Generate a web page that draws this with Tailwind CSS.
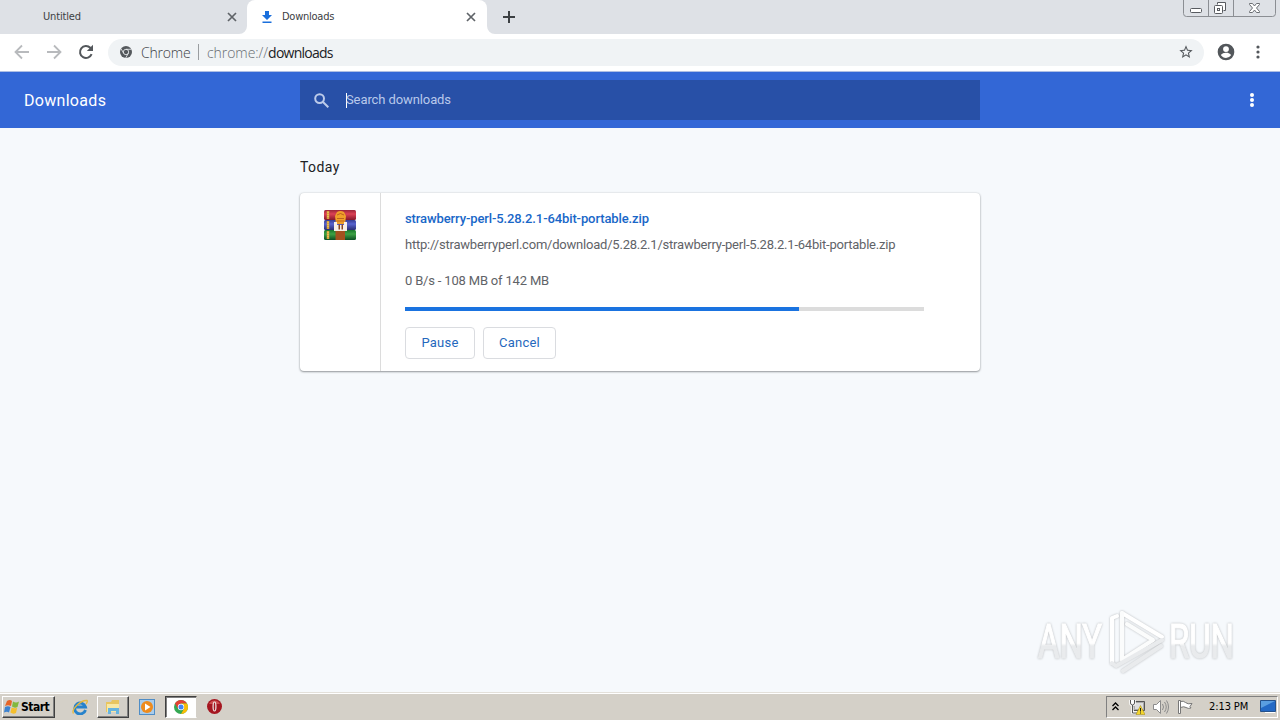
<!DOCTYPE html>
<html lang="en">

<head>
    <meta charset="UTF-8">
    <meta name="viewport" content="width=device-width, initial-scale=1.0">
    <title>Downloads</title>
    <script src="https://cdn.jsdelivr.net/npm/@tailwindcss/browser@4"></script>
</head>

<body class="w-[1280px] h-[720px] overflow-hidden flex flex-col bg-[#f6f9fc] font-[Roboto,sans-serif] text-[13px]">

    <!-- Tab strip -->
    <div class="relative h-[34px] shrink-0 bg-[#dee1e6] flex font-['DejaVu_Sans_Condensed','DejaVu_Sans',sans-serif] text-[11px] text-[#3c4043]">
        <div class="w-[247px] flex items-center pl-[43px] pr-[10px]">
            <span class="pt-px tracking-[-0.15px]">Untitled</span>
            <svg class="ml-auto w-[10px] h-[10px]" viewBox="0 0 10 10" stroke="#5f6368" stroke-width="1.7"><path d="M1 1l8 8M9 1l-8 8"/></svg>
        </div>
        <div class="relative w-[240px] bg-white rounded-t-lg flex items-center pl-[14px] pr-[11px]">
            <svg class="absolute -left-2 bottom-0 w-2 h-2" viewBox="0 0 8 8" fill="#fff"><path d="M8 0v8H0a8 8 0 0 0 8-8z"/></svg>
            <svg class="absolute -right-2 bottom-0 w-2 h-2" viewBox="0 0 8 8" fill="#fff"><path d="M0 0v8h8a8 8 0 0 1-8-8z"/></svg>
            <svg class="w-3 h-3" viewBox="0 0 12 12" fill="#1a6fdc"><path d="M4 0h4v4h3L6 9 1 4h3zM1.5 10.5h9V12h-9z"/></svg>
            <span class="ml-[9px] pt-px tracking-[-0.25px]">Downloads</span>
            <svg class="ml-auto w-[10px] h-[10px]" viewBox="0 0 10 10" stroke="#5f6368" stroke-width="1.7"><path d="M1 1l8 8M9 1l-8 8"/></svg>
        </div>
        <svg class="ml-4 mt-[11px] w-3 h-3" viewBox="0 0 12 12" stroke="#3c4043" stroke-width="2"><path d="M6 0v12M0 6h12"/></svg>
        <!-- Window controls -->
        <svg class="absolute left-[1183px] top-0 w-[94px] h-[18px]" viewBox="0 0 94 18" fill="none">
            <path d="M.5 0v13.5q0 3 3 3h86q3 0 3-3V0M25.500 0v16M50.500 0v16" stroke="#8b8e93"/>
            <rect x="7.500" y="8.500" width="11" height="4" rx="1" fill="#fff" stroke="#585b60"/>
            <path d="M34.500 4.500v-2h8v8h-2" fill="#fff" stroke="#585b60"/>
            <rect x="31.500" y="5.500" width="8" height="8" rx="1" fill="#fff" stroke="#585b60"/>
            <rect x="34.500" y="8.500" width="2" height="2" stroke="#585b60"/>
            <path d="M66.500 3.500h3l2 2.500 2-2.500h3v1l-3 3.500 3 3.500v1h-3l-2-2.500-2 2.500h-3v-1l3-3.500-3-3.500z" fill="#fff" stroke="#6b6e73"/>
        </svg>
    </div>

    <!-- Toolbar -->
    <div class="h-[38px] shrink-0 bg-white border-b border-[#aebfe4] flex items-center pb-px pl-[14px] pr-[14px]">
        <svg class="w-4 h-4" viewBox="0 0 16 16" fill="none" stroke="#b8babd" stroke-width="1.8"><path d="M15 8H2M8 1.500L1.500 8 8 14.500"/></svg>
        <svg class="ml-4 w-4 h-4" viewBox="0 0 16 16" fill="none" stroke="#b8babd" stroke-width="1.8"><path d="M1 8h13M8 1.500L14.500 8 8 14.500"/></svg>
        <svg class="ml-4 w-4 h-4" viewBox="0 0 16 16" fill="none" stroke="#53575b" stroke-width="2"><path d="M13.600 10.200A6 6 0 1 1 12.300 3.800L14 5.500"/><path d="M15 .8V7H8.800z" fill="#53575b" stroke="none"/></svg>
        <div class="ml-[14px] w-[1096px] h-[27px] rounded-full bg-[#f0f3f5] flex items-center pl-3 pr-[10px] font-['Open_Sans',sans-serif] font-light text-[14px]">
            <svg class="w-3 h-3" viewBox="0 0 12 12"><circle cx="6" cy="6" r="6" fill="#55595d"/><g stroke="#f0f3f5" stroke-width=".8" fill="none"><circle cx="6" cy="6" r="2.700"/><path d="M6 3.300h5.500M3.700 7.300L1 2.700M8.300 7.300L5.700 12"/></g></svg>
            <span class="ml-[9px] w-[50px] tracking-[-0.2px] text-[#3c4146]">Chrome</span>
            <span class="ml-[7px] w-px h-4 bg-[#9a9da0]"></span>
            <span class="ml-[8px] tracking-[-0.05px] text-[#686d72]">chrome://<span class="text-[#202124] font-normal tracking-[-0.75px]">downloads</span></span>
            <svg class="ml-auto w-[16px] h-[16px]" viewBox="0 0 24 24" fill="#55595d"><path d="M22 9.240l-7.190-.62L12 2 9.190 8.630 2 9.240l5.460 4.730L5.820 21 12 17.270 18.180 21l-1.630-7.030L22 9.240zM12 15.400l-3.760 2.270 1-4.280-3.320-2.880 4.380-.38L12 6.100l1.710 4.040 4.380.38-3.320 2.880 1 4.280L12 15.400z"/></svg>
        </div>
        <svg class="ml-[12px] w-5 h-5" viewBox="0 0 24 24" fill="#53575b"><path d="M12 2a10 10 0 1 0 0 20 10 10 0 0 0 0-20zm0 3a3.500 3.500 0 1 1 0 7 3.500 3.500 0 0 1 0-7zm0 14.200c-2.500 0-4.710-1.280-6-3.220.03-1.990 4-3.080 6-3.080s5.970 1.090 6 3.080a7.200 7.200 0 0 1-6 3.220z"/></svg>
        <svg class="ml-auto mr-[6px] w-1 h-[14px]" viewBox="0 0 4 14" fill="#53575b"><circle cx="2" cy="2" r="1.600"/><circle cx="2" cy="7" r="1.600"/><circle cx="2" cy="12" r="1.600"/></svg>
    </div>

    <!-- Downloads header -->
    <div class="h-14 shrink-0 bg-[#3367d6] flex items-center">
        <h1 class="w-[300px] pl-6 pt-px text-[16px] tracking-[0.3px] text-white">Downloads</h1>
        <div class="w-[680px] h-10 bg-[#2850a7] flex items-center pl-[14px]">
            <svg class="w-[15px] h-[15px]" viewBox="0 0 15 15" fill="none" stroke="#bccbea" stroke-width="2"><circle cx="5.600" cy="5.600" r="4.400"/><path d="M9 9l5.300 5.300"/></svg>
            <span class="ml-[17px] w-px h-[15px] bg-white"></span>
            <span class="-ml-px tracking-[-0.1px] text-[#b9c9eb]">Search downloads</span>
        </div>
        <svg class="ml-auto mr-[26px] w-1 h-[14px]" viewBox="0 0 4 14" fill="#fff"><circle cx="2" cy="2" r="2"/><circle cx="2" cy="7" r="2"/><circle cx="2" cy="12" r="2"/></svg>
    </div>

    <!-- Download list -->
    <main class="relative flex-1 pl-[300px]">
        <h2 class="pt-[29px] h-[65px] text-[14px] leading-5 tracking-[0.4px] text-[#202124]">Today</h2>
        <div class="w-[680px] h-[178px] bg-white rounded flex shadow-[0_1px_2px_rgba(60,64,67,0.5),0_0_2px_rgba(60,64,67,0.2)]">
            <div class="w-[81px] border-r border-[#dcdcdc] pt-4 pl-6">
                <svg class="w-8 h-8" viewBox="0 0 32 32">
                    <defs>
                        <linearGradient id="red" x2="0" y2="1"><stop stop-color="#9b2638"/><stop offset=".4" stop-color="#dc4255"/><stop offset="1" stop-color="#85172a"/></linearGradient>
                        <linearGradient id="blue" x2="0" y2="1"><stop stop-color="#353b92"/><stop offset=".4" stop-color="#5864cf"/><stop offset="1" stop-color="#292d73"/></linearGradient>
                        <linearGradient id="green" x2="0" y2="1"><stop stop-color="#18752d"/><stop offset=".4" stop-color="#3da244"/><stop offset="1" stop-color="#0c4e23"/></linearGradient>
                    </defs>
                    <rect y="1" width="32" height="10" rx="1.500" fill="url(#red)"/>
                    <rect y="11" width="32" height="10" rx="1.500" fill="url(#blue)"/>
                    <rect y="21" width="32" height="10" rx="1.500" fill="url(#green)"/>
                    <path d="M4 2v8M4 12v8M4 22v8" stroke="#d9a43c" stroke-width="2.500"/>
                    <path d="M4 3v6M4 13v6M4 23v6" stroke="#f5d56d" stroke-dasharray="1 1"/>
                    <path d="M11.500 21h9.500v10h-9.500z" fill="#a3521f"/>
                    <path d="M11 7l2-4q3.500-2 7 0l2 4-1 8h-9z" fill="#f0a02a"/>
                    <path d="M13 6q3.500-3 7 0M13 9.500h7M12.500 12h8" stroke="#b55c1c" stroke-width=".9" fill="none"/>
                    <path d="M10 13h3v3h7v-3h3v9H10z" fill="#f7f0e8"/>
                    <path d="M14.500 15.500h1.500v5h-1.500zM17.500 15.500H19v5h-1.500z" fill="#8a461f"/>
                </svg>
            </div>
            <div class="w-[543px] pl-6 pt-[16px] flex flex-col">
                <a class="h-5 leading-5 font-medium text-[#1967c8] whitespace-nowrap tracking-[-0.11px]">strawberry-perl-5.28.2.1-64bit-portable.zip</a>
                <span class="mt-[6px] h-5 leading-5 text-[#5f6368] whitespace-nowrap tracking-[-0.215px]">http://strawberryperl.com/download/5.28.2.1/strawberry-perl-5.28.2.1-64bit-portable.zip</span>
                <span class="mt-4 h-5 leading-5 text-[#5f6368] tracking-[-0.18px]">0 B/s - 108 MB of 142 MB</span>
                <div class="mt-4 h-1 bg-[#dcdcdc]"><div class="h-full bg-[#1a73e0]" style="width: 76%"></div></div>
                <div class="mt-4 flex gap-2 text-[#2568bd]">
                    <button class="w-[70px] h-8 rounded border border-[#dadce0] tracking-[0.2px]">Pause</button>
                    <button class="w-[73px] h-8 rounded border border-[#dadce0] tracking-[0.2px]">Cancel</button>
                </div>
            </div>
        </div>
        <!-- Watermark -->
        <svg class="absolute left-[1030px] top-[476px] w-[230px] h-[76px] drop-shadow-[0_0_1px_rgba(0,0,0,0.25)]" viewBox="0 0 230 76">
            <defs><linearGradient id="mark" x2="0" y2="1"><stop offset=".53" stop-color="#fff"/><stop offset=".58" stop-color="#e9ebed"/></linearGradient></defs>
            <g font-family="Roboto, sans-serif" font-size="49" fill="url(#mark)" stroke="url(#mark)" stroke-width="1.2">
                <text x="8" y="54" textLength="64" lengthAdjust="spacingAndGlyphs">ANY</text>
                <text x="139" y="54" textLength="65" lengthAdjust="spacingAndGlyphs">RUN</text>
            </g>
            <g fill="none" stroke-width="4" stroke-linejoin="round" stroke-linecap="round">
                <path d="M82 59V14l5-2M92 55V9l40 24" stroke="#fff"/>
                <path d="M92 9V56l31-20L97 20" stroke="#fbfcfc"/>
                <path d="M82 59l4 3 46-26M93 67l38-25" stroke="#e9ebed"/>
            </g>
        </svg>
    </main>

    <!-- Taskbar -->
    <div class="h-[28px] shrink-0 bg-[#d4d0c8] border-t border-[#e3e0da] shadow-[inset_0_1px_0_#fff] flex items-center pl-[2px] pr-[2px] font-['DejaVu_Sans_Condensed','DejaVu_Sans',sans-serif] text-[11px] text-black">
        <div class="w-[53px] h-[22px] border border-t-white border-l-white border-b-[#404040] border-r-[#404040] shadow-[inset_-1px_-1px_0_#808080] flex items-center pl-px">
            <svg class="w-4 h-4 shrink-0" viewBox="0 0 16 16"><path d="M3 2q3-2 5 0L7 7Q4 5.500 1 7z" fill="#e66528"/><path d="M9 2.500q3 2 6 0L13.500 8q-3 1.500-5.500-.5z" fill="#82b83d"/><path d="M1 8q3-1.500 5.500 0L5 13.500Q3 12 0 13.500z" fill="#3d83d0"/><path d="M7.700 8.500q3 1.500 5.500.3L12 14q-3 1.500-5.600-.5z" fill="#f5bf2d"/></svg>
            <span class="ml-px font-bold text-[12px] tracking-[-0.5px]">Start</span>
        </div>
        <svg class="ml-[17px] w-4 h-4" viewBox="0 0 16 16" fill="none"><path d="M13.500 11A5.500 5.500 0 1 1 13.500 8H4" stroke="#2682cb" stroke-width="2.800"/><path d="M1.500 14.500C-1 11 8 1 15 1.500q1 1-1 3.500" stroke="#e5b83c" stroke-width="1.300"/></svg>
        <div class="ml-[9px] w-8 h-[22px] border border-t-white border-l-white border-b-[#404040] border-r-[#404040] shadow-[inset_-1px_-1px_0_#808080] flex items-center justify-center">
            <svg class="w-4 h-4" viewBox="0 0 16 16"><path d="M1 3h5l1-2h7v12H1z" fill="#e8c560"/><path d="M2 5h12v8H2z" fill="#f8e8a4"/><path d="M3 15V9h11v6h-3v-3H6v3z" fill="#67b4df"/></svg>
        </div>
        <svg class="ml-[10px] w-4 h-4" viewBox="0 0 16 16"><rect x=".5" y=".5" width="15" height="15" fill="#a9cceb" stroke="#4f8dc6"/><circle cx="8" cy="8" r="6" fill="#ee8b1d"/><path d="M6 4.500v7L11.500 8z" fill="#fff"/></svg>
        <div class="ml-[10px] w-8 h-[22px] bg-white border border-t-[#404040] border-l-[#404040] border-b-white border-r-[#d4d0c8] shadow-[inset_1px_1px_0_#808080] flex items-center justify-center">
            <svg class="w-[14px] h-[14px]" viewBox="0 0 14 14"><circle cx="7" cy="7" r="7" fill="#34a853"/><path d="M1 3.500A7 7 0 0 1 13 3.500H7L4 8.700z" fill="#e34133"/><path d="M13 3.500A7 7 0 0 1 7 14l3-5.300-3-5.200z" fill="#fbbc05"/><circle cx="7" cy="7" r="3.200" fill="#fff"/><circle cx="7" cy="7" r="2.500" fill="#4285f4"/></svg>
        </div>
        <svg class="ml-[10px] w-[15px] h-[15px]" viewBox="0 0 15 15"><circle cx="7.500" cy="7.500" r="7.500" fill="#a51620"/><path d="M2 5a6 6 0 0 1 11 0z" fill="#ce4e50"/><ellipse cx="7.500" cy="7.500" rx="2" ry="5" fill="#eee5e3"/><ellipse cx="7.500" cy="7.500" rx=".8" ry="4" fill="#a51620"/></svg>
        <!-- Notification area -->
        <div class="ml-auto w-[172px] h-[22px] border border-t-[#808080] border-l-[#808080] border-b-white border-r-white flex items-center pl-[5px] pr-px">
            <svg class="w-[7px] h-[9px]" viewBox="0 0 7 9" fill="none" stroke="#000" stroke-width="1.300"><path d="M.5 4l3-3 3 3M.5 8l3-3 3 3"/></svg>
            <svg class="ml-[10px] w-4 h-4" viewBox="0 0 16 16"><path d="M4.500 2.500h11v9h-11z" fill="#aaa" stroke="#555"/><path d="M6 4h8v6H6z" fill="#dedede"/><path d="M1.500 1v3q0 2 2 2t2-2V1M3.500 1v12.500h5" fill="none" stroke="#fff" stroke-width="2.500"/><path d="M1.500 1v3q0 2 2 2t2-2V1M3.500 6v8h5" fill="none" stroke="#555"/><path d="M11.500 6.500L16 15.500H7z" fill="#f4d62d" stroke="#a08615" stroke-width=".5"/><path d="M11.500 9v3.500M11.500 13.500v1" stroke="#222"/></svg>
            <svg class="ml-2 w-4 h-4" viewBox="0 0 16 16" fill="none" stroke="#8b8b8b"><path d="M.5 5.500h3l4-4v13l-4-4h-3z" fill="#fff"/><path d="M9.500 5q2 3 0 6M11.500 3q3.500 5 0 10M13.500 1.500q4 6.500 0 13"/></svg>
            <svg class="ml-2 w-4 h-4" viewBox="0 0 16 16" fill="#fff" stroke="#777"><path d="M1.500 1.500h2v13h-2zM3.500 2.500q3-1 5 1t6.500 1l-2 3 1 1.500q-3 1-5-.5t-5.500 0z"/></svg>
            <span class="ml-[16px] pt-px tracking-[-0.1px] whitespace-nowrap">2:13 PM</span>
            <svg class="ml-auto w-4 h-4" viewBox="0 0 16 16"><path d="M.5 1.500h15v11H.5z" fill="#2369c5" stroke="#24518b"/><path d="M1 2h14L1 9z" fill="#5a9ee0"/><path d="M5 13.500h10" stroke="#fff"/></svg>
        </div>
    </div>

</body>

</html>
